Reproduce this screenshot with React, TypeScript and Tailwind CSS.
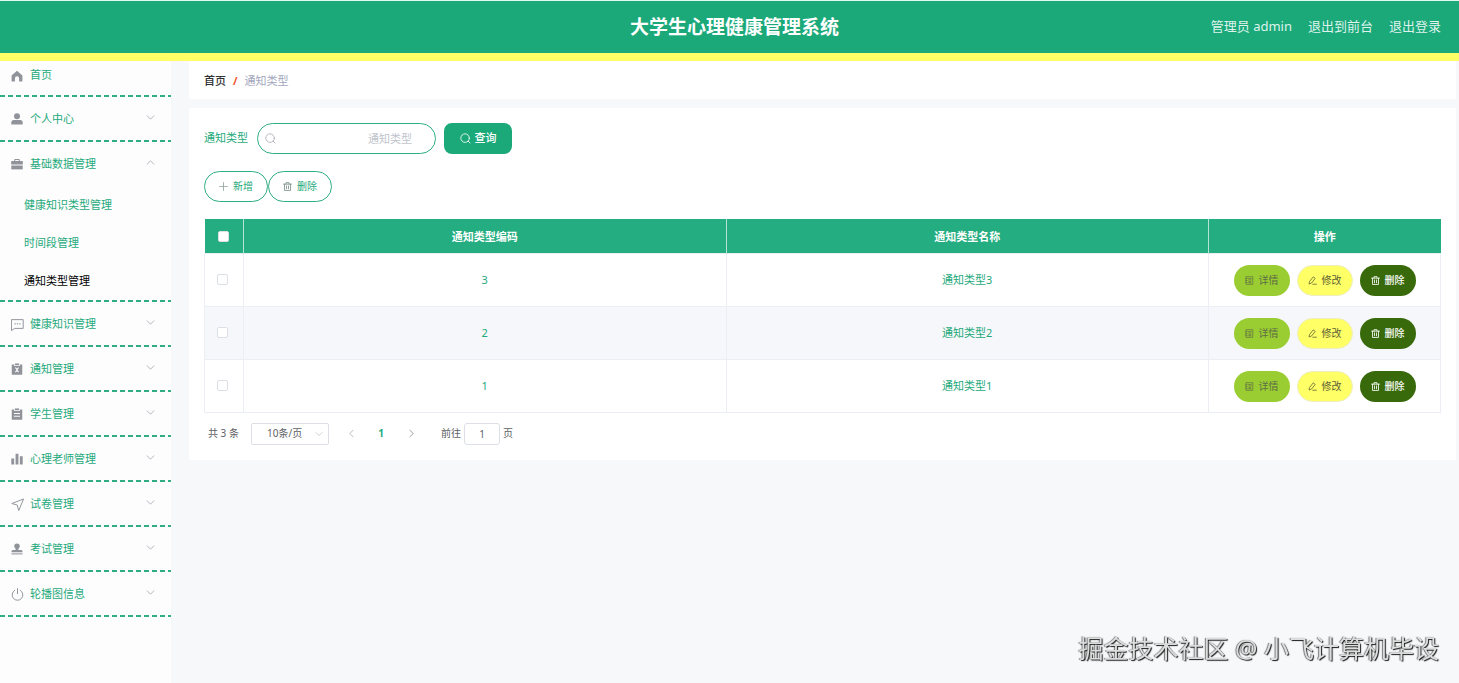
import { useState, type ReactNode } from 'react';

type IconProps = { children: ReactNode; className?: string };

function Solid({ children, className = 'size-3' }: IconProps) {
  return (
    <svg viewBox="0 0 16 16" fill="currentColor" fillRule="evenodd" aria-hidden="true" className={className}>
      {children}
    </svg>
  );
}

function Line({ children, className = 'size-3' }: IconProps) {
  return (
    <svg
      viewBox="0 0 16 16"
      fill="none"
      stroke="currentColor"
      strokeWidth="1.2"
      strokeLinecap="round"
      strokeLinejoin="round"
      aria-hidden="true"
      className={className}
    >
      {children}
    </svg>
  );
}

const HomeIcon = () => (
  <Solid>
    <path d="M8 1 15.200 7.200V15.200h-4.400v-4a2.800 2.800 0 0 0-5.600 0v4H.8V7.200Z" />
  </Solid>
);
const UserIcon = () => (
  <Solid>
    <circle cx="8" cy="4.200" r="4" />
    <path d="M.4 15.200v-2.600a3.400 3.400 0 0 1 3.400-3.400h8.400a3.400 3.400 0 0 1 3.400 3.400v2.600Z" />
  </Solid>
);
const CaseIcon = () => (
  <Solid>
    <path d="M4.3 4V2.6A1.3 1.3 0 0 1 5.6 1.3h4.8a1.3 1.3 0 0 1 1.3 1.3V4H15a.8.8 0 0 1 .8.8v4H.2v-4A.8.8 0 0 1 1 4Zm1.3 0h4.8V2.6H5.6Z" />
    <path d="M.4 10h15.200v5.200H.4Z" />
  </Solid>
);
const ChatIcon = () => (
  <Line className="size-[13px]">
    <path d="M1 2h14v10.800H4.600L1 15.200Z" />
    <path d="M4.800 7.200h.4M7.800 7.200h.4M10.800 7.200h.4" strokeWidth="1.600" />
  </Line>
);
const ReleaseIcon = () => (
  <Solid>
    <path d="M1 2h3.2v2h7.6V2H15v13.500H1Zm4.300 4.600L7 8.300v1.500l-1.700 1.800 1 1L8 10.900l1.700 1.700 1-1L9 9.800V8.400l1.700-1.800-1-1L8 7.300 6.300 5.600Z" />
    <path d="M5.200.6h5.600V3H5.200Z" />
  </Solid>
);
const OrderIcon = () => (
  <Solid>
    <path d="M1 2h3.200v2h7.600V2H15v13.500H1ZM4 6.800v1.300h8V6.800Zm0 3.600v1.300h8v-1.300Z" />
    <path d="M5.200.6h5.600V3H5.200Z" />
  </Solid>
);
const DataIcon = () => (
  <Solid>
    <path d="M.4 7.200h3.800v8H.4ZM6.100 1h3.800v14.200H6.100ZM11.800 4.400h3.800v10.800h-3.800Z" />
  </Solid>
);
const PlaneIcon = () => (
  <Line className="size-[13px]">
    <path d="M15 1.400 1 6.800l6.600 1.800L9.400 15Z" />
  </Line>
);
const StampIcon = () => (
  <Solid>
    <path d="M8 .6a3.700 3.700 0 0 1 3.700 3.700c0 1.800-1.900 2.600-1.900 4.300v.6h3.600a2 2 0 0 1 2 2v1.200H.6v-1.200a2 2 0 0 1 2-2h3.600v-.6c0-1.700-1.900-2.500-1.900-4.300A3.700 3.700 0 0 1 8 .6Z" />
    <path d="M.6 13.800h14.800v1.400H.6Z" />
  </Solid>
);
const PowerIcon = () => (
  <Line className="size-[13px]">
    <path d="M4.600 2.800a6.600 6.600 0 1 0 6.800 0M8 .7v6.300" />
  </Line>
);
const SearchIcon = ({ className = 'size-[11px]' }: { className?: string }) => (
  <Line className={className}>
    <circle cx="7.400" cy="7.400" r="6.200" />
    <path d="m12 12 2.600 2.600" />
  </Line>
);
const PlusIcon = () => (
  <Line className="size-[9px]">
    <path d="M8 1v14M1 8h14" />
  </Line>
);
const TrashIcon = () => (
  <Line className="size-[9px]">
    <path d="M1 3.800h14M5.300 3.600V1.200h5.400v2.400M2.700 4v11h10.600V4M6.200 7v5M9.800 7v5" strokeWidth="1.500" />
  </Line>
);
const DetailIcon = () => (
  <Line className="size-[9px]">
    <path d="M2.500 1.200h11.300v13.600H2.500ZM1.200 4.500h2.600M1.200 8h2.600M1.200 11.500h2.600M6.500 4.500h4.500M6.500 7h4.500M7.500 10h3v2.200h-3Z" />
  </Line>
);
const EditIcon = () => (
  <Line className="size-[9px]">
    <path d="m3 9.500 6.300-8 3.500 2.700-6.200 8L2.600 14ZM8.500 14.600H15" strokeWidth="1.400" />
  </Line>
);
const Chevron = ({ d, className }: { d: string; className?: string }) => (
  <Line className={className}>
    <path d={d} strokeWidth="1.500" />
  </Line>
);

type MenuEntry = { label: string; icon: ReactNode; children?: string[] };

const menu: MenuEntry[] = [
  { label: '个人中心', icon: <UserIcon /> },
  {
    label: '基础数据管理',
    icon: <CaseIcon />,
    children: ['健康知识类型管理', '时间段管理', '通知类型管理'],
  },
  { label: '健康知识管理', icon: <ChatIcon /> },
  { label: '通知管理', icon: <ReleaseIcon /> },
  { label: '学生管理', icon: <OrderIcon /> },
  { label: '心理老师管理', icon: <DataIcon /> },
  { label: '试卷管理', icon: <PlaneIcon /> },
  { label: '考试管理', icon: <StampIcon /> },
  { label: '轮播图信息', icon: <PowerIcon /> },
];

const rows = [
  { code: 3, name: '通知类型3' },
  { code: 2, name: '通知类型2' },
  { code: 1, name: '通知类型1' },
];

function Dashes() {
  return (
    <div className="h-[2px] bg-[repeating-linear-gradient(90deg,#2fae84_0px,#2fae84_5px,transparent_5px,transparent_8px)]" />
  );
}

function Sidebar() {
  const [open, setOpen] = useState('基础数据管理');
  return (
    <nav className="w-[171px] shrink-0 bg-[#fdfdfe] text-[11px] leading-4 text-[#1fa97b]">
      <a href="#home" className="flex h-[34px] items-start gap-[7px] pt-1.5 pl-[11px]">
        <span className="flex h-[18px] items-center text-[#909399]">
          <HomeIcon />
        </span>
        首页
      </a>
      <Dashes />
      <ul>
        {menu.map((entry) => {
          const expanded = open === entry.label;
          return (
            <li key={entry.label}>
              <button
                type="button"
                aria-expanded={expanded}
                onClick={() => setOpen(expanded ? '' : entry.label)}
                className="flex h-[43px] w-full items-center pt-px pr-4 pl-[11px] text-left"
              >
                <span className="flex w-[19px] items-center text-[#909399]">{entry.icon}</span>
                <span className="flex-1">{entry.label}</span>
                <Chevron
                  d={expanded ? 'M2 11l6-6 6 6' : 'M2 5l6 6 6-6'}
                  className="mb-1 size-[9px] text-[#a8abb2]"
                />
              </button>
              {expanded && entry.children && (
                <ul className="pt-px">
                  {entry.children.map((child) => (
                    <li key={child}>
                      <a
                        href="#type"
                        className={
                          child === '通知类型管理'
                            ? 'flex h-[38px] items-center pl-6 text-black'
                            : 'flex h-[38px] items-center pl-6'
                        }
                      >
                        {child}
                      </a>
                    </li>
                  ))}
                </ul>
              )}
              <Dashes />
            </li>
          );
        })}
      </ul>
    </nav>
  );
}

const checkbox =
  'block size-[11px] appearance-none rounded-[2px] border border-[#dcdfe6] bg-white checked:bg-[#1fa97b]';
const pill = 'flex h-[31px] items-center justify-center gap-[5px] rounded-full text-[10px]';

function DataTable() {
  return (
    <table className="w-full table-fixed border-collapse text-center text-[11px] text-[#1fa97b]">
      <colgroup>
        <col className="w-[39px]" />
        <col />
        <col />
        <col className="w-[232px]" />
      </colgroup>
      <thead>
        <tr className="h-[34px] bg-[#24ad80] text-white">
          <th className="border-r border-[#b5e2d2] pt-0.5">
            <input type="checkbox" aria-label="全选" className={checkbox + ' mx-auto'} />
          </th>
          <th className="border-r border-[#b5e2d2] pt-0.5 font-bold">通知类型编码</th>
          <th className="border-r border-[#b5e2d2] pt-0.5 font-bold">通知类型名称</th>
          <th className="pt-0.5 font-bold">操作</th>
        </tr>
      </thead>
      <tbody>
        {rows.map((row) => (
          <tr key={row.code} className="h-[53px] even:bg-[#f5f7fa]">
            <td className="border border-[#ebeef5] pl-3">
              <input type="checkbox" aria-label={row.name} className={checkbox} />
            </td>
            <td className="border border-[#ebeef5] pt-0.5">{row.code}</td>
            <td className="border border-[#ebeef5] pt-0.5">{row.name}</td>
            <td className="border border-[#ebeef5] pt-px">
              <div className="flex justify-center gap-[7px]">
                <button type="button" className={pill + ' w-14 bg-[#9acd32] text-[#5f6d45]'}>
                  <DetailIcon />
                  详情
                </button>
                <button
                  type="button"
                  className={pill + ' w-14 border border-[#eeeec0] bg-[#ffff66] text-[#606235]'}
                >
                  <EditIcon />
                  修改
                </button>
                <button type="button" className={pill + ' w-14 bg-[#386a0b] font-medium text-white'}>
                  <TrashIcon />
                  删除
                </button>
              </div>
            </td>
          </tr>
        ))}
      </tbody>
    </table>
  );
}

function Pagination() {
  return (
    <div className="mt-2.5 flex h-[22px] items-center pl-1 text-[10px] text-[#606266]">
      <span className="w-[43px]">共 3 条</span>
      <label className="relative flex items-center">
        <select
          aria-label="每页条数"
          className="h-[22px] w-[78px] appearance-none rounded-[2px] border border-[#dcdfe6] bg-white pl-[15px]"
        >
          <option>10条/页</option>
        </select>
        <Chevron
          d="M2 5l6 6 6-6"
          className="pointer-events-none absolute right-1.5 size-2 text-[#c0c4cc]"
        />
      </label>
      <button type="button" aria-label="上一页" className="ml-[7px] flex w-[30px] justify-center text-[#b0b3ba]">
        <Chevron d="M11 2 5 8l6 6" className="size-[9px]" />
      </button>
      <button type="button" className="w-[30px] text-center font-bold text-[#24ad80]">
        1
      </button>
      <button type="button" aria-label="下一页" className="flex w-[30px] justify-center text-[#909399]">
        <Chevron d="m5 2 6 6-6 6" className="size-[9px]" />
      </button>
      <label htmlFor="page" className="ml-[15px]">
        前往
      </label>
      <input
        id="page"
        defaultValue="1"
        className="mx-[3px] h-[22px] w-9 rounded-[3px] border border-[#dcdfe6] bg-white text-center"
      />
      <span>页</span>
    </div>
  );
}

export default function App() {
  return (
    <div className="flex min-h-screen flex-col bg-[#f6f8fa] font-['Noto_Sans','Noto_Sans_CJK_SC',sans-serif]">
      <header className="grid h-[61px] grid-cols-[1fr_auto_1fr] items-center border-t border-b-8 border-t-[#e3f8f1] border-b-[#ffff66] bg-[#1ba97a] text-white">
        <h1 className="col-start-2 pl-2.5 text-[19px] font-bold">大学生心理健康管理系统</h1>
        <div className="flex justify-end gap-4 pr-[18px] text-[13px] text-[#dff3ec]">
          <span>管理员 admin</span>
          <a href="#front">退出到前台</a>
          <a href="#logout">退出登录</a>
        </div>
      </header>
      <div className="flex flex-1">
        <Sidebar />
        <main className="mr-[3px] ml-[18px] min-w-0 flex-1">
          <div className="flex h-[38px] items-center gap-[7px] bg-white pt-0.5 pl-[15px] text-[11px]">
            <a href="#home" className="font-medium text-[#303133]">
              首页
            </a>
            <span className="font-bold text-[#f0562f]">/</span>
            <span className="text-[#a3a7bd]">通知类型</span>
          </div>
          <section className="mt-[9px] bg-white px-[15px] pt-[15px] pb-[15px]">
            <form className="flex items-center text-[11px]" onSubmit={(e) => e.preventDefault()}>
              <label htmlFor="keyword" className="mr-[9px] text-[#1fa97b]">
                通知类型
              </label>
              <div className="relative flex items-center">
                <SearchIcon className="absolute left-2 size-[11px] text-[#a8abb2]" />
                <input
                  id="keyword"
                  placeholder="通知类型"
                  className="h-[31px] w-[179px] rounded-full border border-[#2fae84] bg-white pr-[23px] pl-6 text-right text-[#1fa97b] placeholder:text-[#c0c4cc]"
                />
              </div>
              <button
                type="submit"
                className="ml-2 flex h-[31px] w-[68px] items-center justify-center gap-1 rounded-lg bg-[#1ba97a] font-medium text-white"
              >
                <SearchIcon />
                查询
              </button>
            </form>
            <div className="mt-[17px] mb-[17px] flex text-[#1fa97b]">
              <button type="button" className={pill + ' w-16 border border-[#2fae84] bg-white'}>
                <span className="text-[#7d9189]">
                  <PlusIcon />
                </span>
                新增
              </button>
              <button type="button" className={pill + ' w-16 border border-[#2fae84] bg-white'}>
                <span className="text-[#7d9189]">
                  <TrashIcon />
                </span>
                删除
              </button>
            </div>
            <DataTable />
            <Pagination />
          </section>
        </main>
      </div>
      <div className="pointer-events-none fixed right-5 bottom-[17px] text-[25px] leading-9 text-[#dcdddd] [text-shadow:1px_1px_1px_#1a1a1a,-1px_0px_1px_#777777]">
        掘金技术社区 @ 小飞计算机毕设
      </div>
    </div>
  );
}
